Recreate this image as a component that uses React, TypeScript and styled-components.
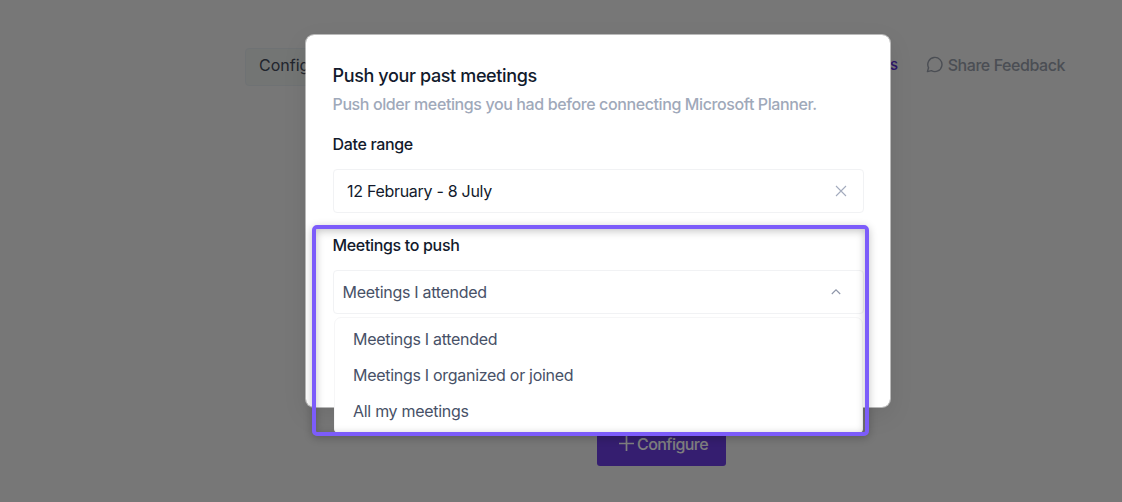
import React, { FC } from 'react';
import styled, { createGlobalStyle } from 'styled-components';

const GlobalStyle = createGlobalStyle`
  *, *::before, *::after {
    box-sizing: border-box;
  }

  body {
    margin: 0;
    overflow: hidden;
    font-family: Inter, 'Liberation Sans', sans-serif;
    font-size: 16px;
    letter-spacing: -0.29px;
    color: #121a2c;
  }
`;

const Page = styled.div`
  position: relative;
  display: flex;
  flex-direction: column;
  justify-content: space-between;
  width: 100%;
  height: 502px;
  overflow: hidden;
  background: #eee;
`;

const Header = styled.header`
  display: flex;
  justify-content: space-between;
  padding: 48px 57px 0 245px;
`;

const Tab = styled.div`
  width: 160px;
  height: 38px;
  padding-left: 13px;
  border: 1px solid #dfe5e8;
  border-radius: 4px;
  background: #e6eae9;
  color: #444b5b;
  letter-spacing: 0;
  line-height: 33px;
`;

const HeaderLinks = styled.div`
  display: flex;
  height: 33px;
  align-items: center;
  font-weight: 500;
`;

const DocsLink = styled.span`
  margin-right: 28px;
  font-size: 15px;
  color: #5a2bd0;
`;

const FeedbackLink = styled.span`
  display: flex;
  align-items: center;
  gap: 5px;
  letter-spacing: -0.44px;
  color: #969ca8;
`;

const Footer = styled.footer`
  padding: 0 0 36px 597px;
`;

const ConfigureButton = styled.button`
  display: flex;
  align-items: center;
  justify-content: center;
  gap: 2px;
  width: 129px;
  height: 44px;
  padding: 0 0 1px 3px;
  border: 0;
  border-radius: 3px;
  background: #6a3ce0;
  color: #fff;
  font: 500 16px Inter, sans-serif;
  letter-spacing: -0.55px;
`;

const Overlay = styled.div`
  position: absolute;
  inset: 0;
  padding: 34px 0 0 305px;
  background: rgba(0, 0, 0, 0.5);
`;

const Modal = styled.section`
  width: 586px;
  height: 374px;
  padding: 28px 26.5px 0;
  border: 1px solid rgba(255, 255, 255, 0.5);
  border-radius: 9px;
  background: #fff;
  background-clip: padding-box;
  box-shadow: 0 8px 24px rgba(0, 0, 0, 0.08);
`;

const Title = styled.h2`
  margin: 0;
  font-size: 18px;
  font-weight: 500;
  letter-spacing: -0.37px;
  line-height: 26px;
`;

const Description = styled.p`
  margin: 3px 0 0;
  font-weight: 500;
  letter-spacing: -0.39px;
  line-height: 24px;
  color: #9fa9ba;
`;

const Label = styled.div<{ $top: number }>`
  margin-top: ${({ $top }) => $top}px;
  font-weight: 500;
  letter-spacing: -0.33px;
  line-height: 24px;
`;

const Field = styled.div<{ $select?: boolean }>`
  position: relative;
  display: flex;
  align-items: center;
  justify-content: space-between;
  width: 531px;
  height: 44px;
  margin-top: 13px;
  padding: ${({ $select }) => ($select ? '0 22px 0 9px' : '0 16px 1px 13.5px')};
  border: 1.5px solid #f1f2f4;
  border-radius: 4px;
  color: ${({ $select }) => ($select ? '#475167' : '#121a2c')};
`;

const Menu = styled.ul`
  position: absolute;
  top: 46px;
  left: 0.5px;
  width: 529px;
  height: 117px;
  margin: 0;
  padding: 3px 0;
  border: 1px solid #f6f6f7;
  border-radius: 7px 7px 5px 5px;
  background: #fff;
  list-style: none;
`;

const MenuItem = styled.li`
  padding-left: 18px;
  line-height: 36px;
`;

const Highlight = styled.div`
  position: absolute;
  top: 225px;
  left: 311.5px;
  width: 557px;
  height: 211px;
  border: 4px solid #7c5cfa;
  border-radius: 5px;
  box-shadow: 0 2px 9px rgba(0, 0, 0, 0.24), inset 0 2px 9px rgba(0, 0, 0, 0.24);
`;

const FeedbackIcon: FC = () => (
  <svg width="17" height="17" viewBox="0 0 24 24" fill="none" stroke="currentColor" strokeWidth="2" strokeLinejoin="round">
    <path d="M2 22l1.6-5.5A10 10 0 1 1 7.6 20.7Z" />
  </svg>
);

const PlusIcon: FC = () => (
  <svg width="17" height="17" viewBox="0 0 17 17" fill="none" stroke="currentColor" strokeWidth="1.7">
    <path d="M8.5 1v15M1 8.5h15" />
  </svg>
);

const CloseIcon: FC = () => (
  <svg width="12" height="12" viewBox="0 0 12 12" fill="none" stroke="#a3abbd" strokeWidth="1.1">
    <path d="M1 1l10 10M11 1L1 11" />
  </svg>
);

const ChevronUpIcon: FC = () => (
  <svg width="10" height="8" viewBox="0 0 10 8" fill="none" stroke="#8d95a8" strokeWidth="1.1">
    <path d="M.8 6L5 1.8 9.2 6" />
  </svg>
);

const options = ['Meetings I attended', 'Meetings I organized or joined', 'All my meetings'];

const App: FC = () => (
  <>
    <GlobalStyle />
    <Page>
      <Header>
        <Tab>Config</Tab>
        <HeaderLinks>
          <DocsLink>s</DocsLink>
          <FeedbackLink>
            <FeedbackIcon />
            Share Feedback
          </FeedbackLink>
        </HeaderLinks>
      </Header>
      <Footer>
        <ConfigureButton>
          <PlusIcon />
          Configure
        </ConfigureButton>
      </Footer>
      <Overlay>
        <Modal>
          <Title>Push your past meetings</Title>
          <Description>Push older meetings you had before connecting Microsoft Planner.</Description>
          <Label $top={16}>Date range</Label>
          <Field>
            12 February - 8 July
            <CloseIcon />
          </Field>
          <Label $top={20}>Meetings to push</Label>
          <Field $select>
            {options[0]}
            <ChevronUpIcon />
            <Menu>
              {options.map((option) => (
                <MenuItem key={option}>{option}</MenuItem>
              ))}
            </Menu>
          </Field>
        </Modal>
      </Overlay>
      <Highlight />
    </Page>
  </>
);

export default App;
